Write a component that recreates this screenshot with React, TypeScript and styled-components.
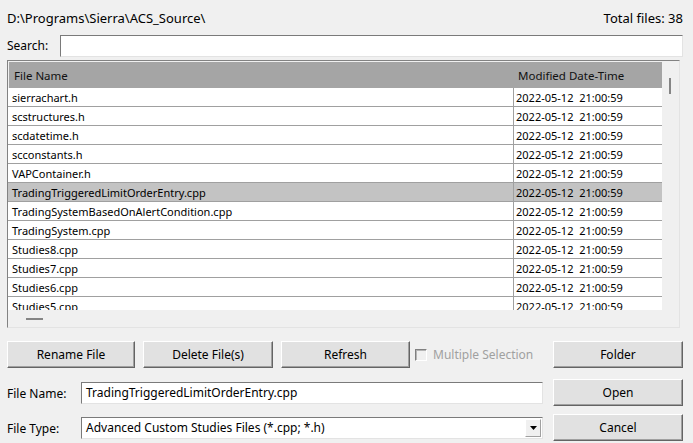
import React from 'react';
import styled, { createGlobalStyle } from 'styled-components';

const GlobalStyle = createGlobalStyle`
  html, body {
    margin: 0;
    padding: 0;
    background: #f0f0f0;
  }
  body {
    font-family: "Noto Sans", "Open Sans", sans-serif;
    font-size: 12px;
    color: #000;
  }
`;

const Dialog = styled.div`
  width: 693px;
  height: 443px;
  box-sizing: border-box;
  padding: 9px 10px 0 7px;
  display: flex;
  flex-direction: column;
  background: #f0f0f0;
`;

const TopRow = styled.div`
  display: flex;
  justify-content: space-between;
  align-items: center;
  height: 17px;
  font-size: 13px;
  padding-right: 0;
`;

const SearchRow = styled.div`
  display: flex;
  align-items: center;
  margin-top: 8px;
  height: 23px;
`;

const Label = styled.span<{ $width: number }>`
  width: ${p => p.$width}px;
  flex-shrink: 0;
`;

const TextBox = styled.div`
  flex: 1;
  height: 22px;
  box-sizing: border-box;
  background: #fff;
  border: 1px solid;
  border-color: #7a7a7a #e3e3e3 #e3e3e3 #7a7a7a;
  display: flex;
  align-items: center;
  padding-left: 4px;
  white-space: nowrap;
  overflow: hidden;
`;

const ListFrame = styled.div`
  margin-top: 3px;
  width: 673px;
  height: 268px;
  box-sizing: border-box;
  border: 1px solid;
  border-color: #828282 #e3e3e3 #e3e3e3 #828282;
  display: grid;
  grid-template-columns: 1fr 17px;
  grid-template-rows: 1fr 17px;
  background: #f0f0f0;
`;

const Table = styled.div`
  overflow: hidden;
  padding: 1px 0 0 0;
  font-size: 11px;
`;

const HeaderRow = styled.div`
  display: grid;
  grid-template-columns: 504px 149px;
  height: 26px;
  margin-left: 1px;
  background: #a5a5a5;
  align-items: center;
`;

const HeaderCell = styled.div<{ $pad: number }>`
  padding-left: ${p => p.$pad}px;
  height: 100%;
  display: flex;
  align-items: center;
  font-size: 11.5px;
  color: #111;
`;

const Row = styled.div<{ $selected?: boolean }>`
  display: grid;
  grid-template-columns: 505px 149px;
  height: 19px;
  box-sizing: border-box;
  border-bottom: 1px solid #a0a0a0;
  background: ${p => (p.$selected ? '#c3c3c3' : '#fff')};
`;

const Cell = styled.div<{ $divider?: boolean }>`
  padding-left: ${p => (p.$divider ? 2 : 4)}px;
  border-left: ${p => (p.$divider ? '1px solid #a0a0a0' : 'none')};
  display: flex;
  align-items: center;
  white-space: pre;
  overflow: hidden;
`;

const VScroll = styled.div`
  position: relative;
`;

const VThumb = styled.div`
  position: absolute;
  left: 7px;
  top: 17px;
  width: 2px;
  height: 16px;
  background: #858585;
`;

const HScroll = styled.div`
  position: relative;
`;

const HThumb = styled.div`
  position: absolute;
  left: 18px;
  top: 8px;
  width: 17px;
  height: 2px;
  background: #858585;
`;

const ButtonRow = styled.div`
  display: grid;
  grid-template-columns: 128px 130px 129px minmax(0, 1fr) 130px;
  column-gap: 8px;
  margin-top: 13px;
  height: 27px;
  align-items: center;
`;

const Button = styled.button`
  height: 27px;
  box-sizing: border-box;
  background: #e1e1e1;
  border: 1px solid;
  border-color: #fff #646464 #646464 #fff;
  box-shadow: inset -1px -1px 0 #a0a0a0;
  font-family: "Noto Sans", "Open Sans", sans-serif;
  font-size: 12px;
  color: #000;
  padding: 0;
`;

const CheckLabel = styled.label`
  display: flex;
  align-items: center;
  gap: 6px;
  color: #a0a0a0;
  margin-left: -3px;
  white-space: nowrap;
`;

const CheckBox = styled.span`
  width: 12px;
  height: 12px;
  box-sizing: border-box;
  border: 1px solid;
  border-color: #808080 #fff #fff #808080;
  box-shadow: inset 1px 1px 0 #b5b5b5;
  background: #f0f0f0;
`;

const FormRow = styled.div<{ $top: number }>`
  display: grid;
  grid-template-columns: 74px 462px minmax(0, 1fr) 130px;
  align-items: center;
  margin-top: ${p => p.$top}px;
  height: 27px;
`;

const FieldLabel = styled.span`
  padding-top: 1px;
`;

const Select = styled.div`
  height: 22px;
  box-sizing: border-box;
  background: #fff;
  border: 1px solid;
  border-color: #7a7a7a #e3e3e3 #e3e3e3 #7a7a7a;
  display: flex;
  align-items: center;
  padding-left: 4px;
  justify-content: space-between;
`;

const DropButton = styled.span`
  width: 16px;
  height: 18px;
  box-sizing: border-box;
  margin-right: 1px;
  background: #f0f0f0;
  border: 1px solid;
  border-color: #fff #a0a0a0 #a0a0a0 #fff;
  display: flex;
  align-items: center;
  justify-content: center;
`;

const files = [
  'sierrachart.h',
  'scstructures.h',
  'scdatetime.h',
  'scconstants.h',
  'VAPContainer.h',
  'TradingTriggeredLimitOrderEntry.cpp',
  'TradingSystemBasedOnAlertCondition.cpp',
  'TradingSystem.cpp',
  'Studies8.cpp',
  'Studies7.cpp',
  'Studies6.cpp',
  'Studies5.cpp',
];

const selectedFile = 'TradingTriggeredLimitOrderEntry.cpp';

export default function App() {
  return (
    <>
      <GlobalStyle />
      <Dialog>
        <TopRow>
          <span>D:\Programs\Sierra\ACS_Source\</span>
          <span>Total files: 38</span>
        </TopRow>

        <SearchRow>
          <Label $width={53}>Search:</Label>
          <TextBox />
        </SearchRow>

        <ListFrame>
          <Table>
            <HeaderRow>
              <HeaderCell $pad={5}>File Name</HeaderCell>
              <HeaderCell $pad={5}>Modified Date-Time</HeaderCell>
            </HeaderRow>
            {files.map(name => (
              <Row key={name} $selected={name === selectedFile}>
                <Cell>{name}</Cell>
                <Cell $divider>{'2022-05-12  21:00:59'}</Cell>
              </Row>
            ))}
          </Table>
          <VScroll>
            <VThumb />
          </VScroll>
          <HScroll>
            <HThumb />
          </HScroll>
          <div />
        </ListFrame>

        <ButtonRow>
          <Button>Rename File</Button>
          <Button>Delete File(s)</Button>
          <Button>Refresh</Button>
          <CheckLabel>
            <CheckBox />
            Multiple Selection
          </CheckLabel>
          <Button>Folder</Button>
        </ButtonRow>

        <FormRow $top={11}>
          <FieldLabel>File Name:</FieldLabel>
          <TextBox>TradingTriggeredLimitOrderEntry.cpp</TextBox>
          <span />
          <Button>Open</Button>
        </FormRow>

        <FormRow $top={8}>
          <FieldLabel>File Type:</FieldLabel>
          <Select>
            Advanced Custom Studies Files (*.cpp; *.h)
            <DropButton>
              <svg width="7" height="4" viewBox="0 0 7 4">
                <path d="M0 0 H7 L3.5 4 Z" fill="#000" />
              </svg>
            </DropButton>
          </Select>
          <span />
          <Button>Cancel</Button>
        </FormRow>
      </Dialog>
    </>
  );
}
